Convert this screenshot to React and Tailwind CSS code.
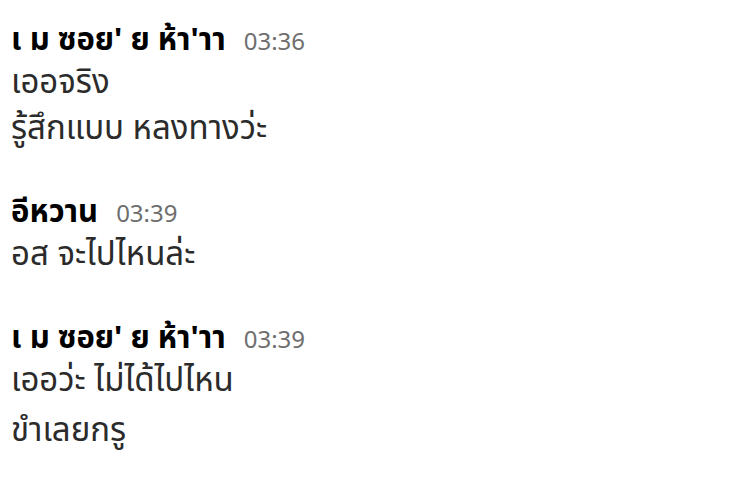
const messages = [
  { name: "เ ม ซอย' ย ห้า'าา", time: '03:36', lines: ['เออจริง', 'รู้สึกแบบ หลงทางว่ะ'] },
  { name: 'อีหวาน', time: '03:39', lines: ['อส จะไปไหนล่ะ'] },
  { name: "เ ม ซอย' ย ห้า'าา", time: '03:39', lines: ['เออว่ะ ไม่ได้ไปไหน', 'ขำเลยกรู'], loose: true },
];

export default function App() {
  return (
    <div className="w-[734px] h-[504px] bg-white pl-[11px] pt-[18px] flex flex-col gap-[40px] font-['Noto_Sans','Noto_Sans_Thai',sans-serif] text-[#2b2b2b] overflow-hidden">
      {messages.map((m, i) => (
        <div key={i} className="flex flex-col">
          <div className="flex items-baseline gap-[18px] h-[40px]">
            <span className="text-[31px] leading-[40px] font-bold text-black">{m.name}</span>
            <span className="text-[24px] text-[#6e6e6e]">{m.time}</span>
          </div>
          {m.lines.map((l, j) => (
            <div key={j} className={m.loose && j > 0 ? 'text-[33px] leading-[46px] mt-[4px]' : 'text-[33px] leading-[46px]'}>{l}</div>
          ))}
        </div>
      ))}
    </div>
  );
}
